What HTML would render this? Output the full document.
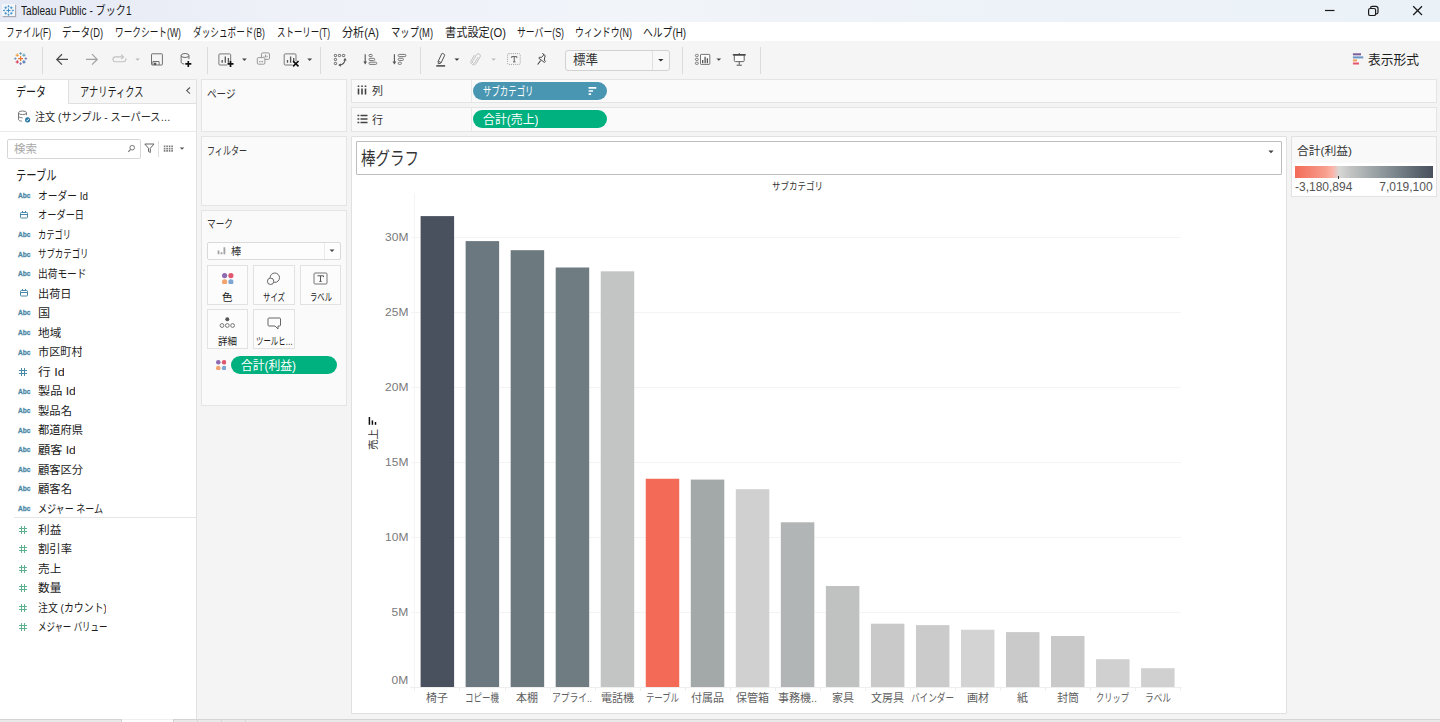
<!DOCTYPE html><html lang="ja"><head><meta charset="utf-8"><title>Tableau Public - ブック1</title><style>
html,body{margin:0;padding:0}
body{width:1440px;height:722px;position:relative;overflow:hidden;background:#f4f4f4;font-family:"Liberation Sans",sans-serif}
.b{position:absolute;display:block}
.t{position:absolute;white-space:nowrap;line-height:1.15;font-family:"Liberation Sans",sans-serif}
.j{position:absolute;display:block;overflow:hidden;white-space:nowrap;color:transparent;line-height:1;font-family:"Liberation Sans","Noto Sans CJK JP",sans-serif}
.j svg{position:absolute;left:0;top:0;overflow:visible}
.j svg text{font-family:"Liberation Sans","Noto Sans CJK JP",sans-serif}
</style></head><body><div class="b" style="left:0px;top:0px;width:1440px;height:22px;background:linear-gradient(90deg,#e5e9f4 0%,#eef1f8 20%,#f1f4f9 45%,#ecf2f8 75%,#ebf2f7 100%);"></div><span class="j" style="left:21.00px;top:3.50px;width:110.50px;height:15.00px;font-size:12px;"><svg width="110.50" height="15.00"><text x="0" y="10.56" font-size="12" fill="#1b1b1b" textLength="110.5" lengthAdjust="spacingAndGlyphs">Tableau Public - ブック1</text></svg></span><div class="b" style="left:0px;top:22px;width:1440px;height:19px;background:#fff;"></div><span class="j" style="left:6.00px;top:26.00px;width:45.00px;height:15.00px;font-size:12px;"><svg width="45.00" height="15.00"><text x="0" y="10.56" font-size="12" fill="#1b1b1b" textLength="45" lengthAdjust="spacingAndGlyphs">ファイル(F)</text></svg></span><span class="j" style="left:62.00px;top:26.00px;width:41.00px;height:15.00px;font-size:12px;"><svg width="41.00" height="15.00"><text x="0" y="10.56" font-size="12" fill="#1b1b1b" textLength="41" lengthAdjust="spacingAndGlyphs">データ(D)</text></svg></span><span class="j" style="left:115.00px;top:26.00px;width:66.00px;height:15.00px;font-size:12px;"><svg width="66.00" height="15.00"><text x="0" y="10.56" font-size="12" fill="#1b1b1b" textLength="66" lengthAdjust="spacingAndGlyphs">ワークシート(W)</text></svg></span><span class="j" style="left:193.00px;top:26.00px;width:72.00px;height:15.00px;font-size:12px;"><svg width="72.00" height="15.00"><text x="0" y="10.56" font-size="12" fill="#1b1b1b" textLength="72" lengthAdjust="spacingAndGlyphs">ダッシュボード(B)</text></svg></span><span class="j" style="left:277.00px;top:26.00px;width:53.00px;height:15.00px;font-size:12px;"><svg width="53.00" height="15.00"><text x="0" y="10.56" font-size="12" fill="#1b1b1b" textLength="53" lengthAdjust="spacingAndGlyphs">ストーリー(T)</text></svg></span><span class="j" style="left:342.00px;top:26.00px;width:37.00px;height:15.00px;font-size:12px;"><svg width="37.00" height="15.00"><text x="0" y="10.56" font-size="12" fill="#1b1b1b" textLength="37" lengthAdjust="spacingAndGlyphs">分析(A)</text></svg></span><span class="j" style="left:391.00px;top:26.00px;width:42.00px;height:15.00px;font-size:12px;"><svg width="42.00" height="15.00"><text x="0" y="10.56" font-size="12" fill="#1b1b1b" textLength="42" lengthAdjust="spacingAndGlyphs">マップ(M)</text></svg></span><span class="j" style="left:445.00px;top:26.00px;width:61.00px;height:15.00px;font-size:12px;"><svg width="61.00" height="15.00"><text x="0" y="10.56" font-size="12" fill="#1b1b1b" textLength="61" lengthAdjust="spacingAndGlyphs">書式設定(O)</text></svg></span><span class="j" style="left:517.00px;top:26.00px;width:47.00px;height:15.00px;font-size:12px;"><svg width="47.00" height="15.00"><text x="0" y="10.56" font-size="12" fill="#1b1b1b" textLength="47" lengthAdjust="spacingAndGlyphs">サーバー(S)</text></svg></span><span class="j" style="left:575.00px;top:26.00px;width:57.00px;height:15.00px;font-size:12px;"><svg width="57.00" height="15.00"><text x="0" y="10.56" font-size="12" fill="#1b1b1b" textLength="57" lengthAdjust="spacingAndGlyphs">ウィンドウ(N)</text></svg></span><span class="j" style="left:643.00px;top:26.00px;width:43.00px;height:15.00px;font-size:12px;"><svg width="43.00" height="15.00"><text x="0" y="10.56" font-size="12" fill="#1b1b1b" textLength="43" lengthAdjust="spacingAndGlyphs">ヘルプ(H)</text></svg></span><div class="b" style="left:0px;top:41px;width:1440px;height:39px;background:#f5f5f5;"></div><div class="b" style="left:565px;top:50px;width:105px;height:21px;background:#f8f8f8;border:1px solid #d2d2d2;border-radius:3px;box-sizing:border-box;"></div><div class="b" style="left:652px;top:51px;width:1px;height:19px;background:#e0e0e0;"></div><span class="j" style="left:572.50px;top:53.00px;width:25.00px;height:16.25px;font-size:13px;"><svg width="25.00" height="16.25"><text x="0" y="11.44" font-size="13" fill="#333" textLength="25" lengthAdjust="spacingAndGlyphs">標準</text></svg></span><span class="j" style="left:1368.00px;top:53.20px;width:51.00px;height:16.25px;font-size:13px;"><svg width="51.00" height="16.25"><text x="0" y="11.44" font-size="13" fill="#1c1c1c" textLength="51" lengthAdjust="spacingAndGlyphs">表示形式</text></svg></span><div class="b" style="left:0px;top:80px;width:1440px;height:642px;background:#f4f4f4;"></div><div class="b" style="left:0px;top:80px;width:196px;height:639px;background:#fff;"></div><div class="b" style="left:196px;top:80px;width:1px;height:639px;background:#e2e2e2;"></div><div class="b" style="left:0px;top:79px;width:197px;height:1px;background:#e4e4e4;"></div><div class="b" style="left:68px;top:80px;width:128px;height:24px;background:#f7f7f7;border-left:1px solid #e0e0e0;border-bottom:1px solid #e0e0e0;box-sizing:border-box;"></div><span class="j" style="left:16.00px;top:85.30px;width:30.00px;height:16.25px;font-size:13px;"><svg width="30.00" height="16.25"><text x="0" y="11.44" font-size="13" fill="#1c1c1c" textLength="30" lengthAdjust="spacingAndGlyphs">データ</text></svg></span><span class="j" style="left:80.00px;top:85.30px;width:63.50px;height:16.25px;font-size:13px;"><svg width="63.50" height="16.25"><text x="0" y="11.44" font-size="13" fill="#1c1c1c" textLength="63.5" lengthAdjust="spacingAndGlyphs">アナリティクス</text></svg></span><span class="j" style="left:34.50px;top:111.20px;width:135.50px;height:14.25px;font-size:11.4px;"><svg width="135.50" height="14.25"><text x="0" y="10.03" font-size="11.4" fill="#2a2a2a" textLength="135.5" lengthAdjust="spacingAndGlyphs">注文 (サンプル - スーパース…</text></svg></span><div class="b" style="left:0px;top:131px;width:196px;height:1px;background:#e9e9e9;"></div><div class="b" style="left:7px;top:139px;width:134px;height:20px;background:#fff;border:1px solid #d6d6d6;border-radius:2px;box-sizing:border-box;"></div><span class="j" style="left:14.00px;top:143.00px;width:23.00px;height:14.38px;font-size:11.5px;"><svg width="23.00" height="14.38"><text x="0" y="10.12" font-size="11.5" fill="#a8a8a8" textLength="23" lengthAdjust="spacingAndGlyphs">検索</text></svg></span><div class="b" style="left:158px;top:141px;width:1px;height:16px;background:#e0e0e0;"></div><span class="j" style="left:16.00px;top:168.00px;width:40.50px;height:16.88px;font-size:13.5px;"><svg width="40.50" height="16.88"><text x="0" y="11.88" font-size="13.5" fill="#1c1c1c" textLength="40.5" lengthAdjust="spacingAndGlyphs">テーブル</text></svg></span><span class="j" style="left:37.60px;top:189.80px;width:49.95px;height:14.38px;font-size:11.5px;"><svg width="49.95" height="14.38"><text x="0" y="10.12" font-size="11.5" fill="#1c1c1c" textLength="49.95" lengthAdjust="spacingAndGlyphs">オーダー Id</text></svg></span><div class="t" style="top:191.1px;font-size:8px;color:#4a87a5;font-weight:bold;-webkit-text-stroke:0.3px #4a87a5;transform:scaleX(.82);transform-origin:0 0;left:18px;">Abc</div><span class="j" style="left:37.60px;top:209.35px;width:46.07px;height:14.38px;font-size:11.5px;"><svg width="46.07" height="14.38"><text x="0" y="10.12" font-size="11.5" fill="#1c1c1c" textLength="46.07" lengthAdjust="spacingAndGlyphs">オーダー日</text></svg></span><svg class="b" style="left:20px;top:211px" width="9" height="8" viewBox="0 0 9 8" ><rect x="0.5" y="1.5" width="7" height="5.5" rx=".8" fill="none" stroke="#4a8aa8"/><path d="M0.5 3.5h7M2.5 0v1.5M5.5 0v1.5" stroke="#4a8aa8" fill="none"/></svg><span class="j" style="left:37.60px;top:228.90px;width:32.98px;height:14.38px;font-size:11.5px;"><svg width="32.98" height="14.38"><text x="0" y="10.12" font-size="11.5" fill="#1c1c1c" textLength="32.98" lengthAdjust="spacingAndGlyphs">カテゴリ</text></svg></span><div class="t" style="top:230.2px;font-size:8px;color:#4a87a5;font-weight:bold;-webkit-text-stroke:0.3px #4a87a5;transform:scaleX(.82);transform-origin:0 0;left:18px;">Abc</div><span class="j" style="left:37.60px;top:248.45px;width:50.44px;height:14.38px;font-size:11.5px;"><svg width="50.44" height="14.38"><text x="0" y="10.12" font-size="11.5" fill="#1c1c1c" textLength="50.44" lengthAdjust="spacingAndGlyphs">サブカテゴリ</text></svg></span><div class="t" style="top:249.8px;font-size:8px;color:#4a87a5;font-weight:bold;-webkit-text-stroke:0.3px #4a87a5;transform:scaleX(.82);transform-origin:0 0;left:18px;">Abc</div><span class="j" style="left:37.60px;top:268.00px;width:48.50px;height:14.38px;font-size:11.5px;"><svg width="48.50" height="14.38"><text x="0" y="10.12" font-size="11.5" fill="#1c1c1c" textLength="48.5" lengthAdjust="spacingAndGlyphs">出荷モード</text></svg></span><div class="t" style="top:269.3px;font-size:8px;color:#4a87a5;font-weight:bold;-webkit-text-stroke:0.3px #4a87a5;transform:scaleX(.82);transform-origin:0 0;left:18px;">Abc</div><span class="j" style="left:37.60px;top:287.55px;width:33.46px;height:14.38px;font-size:11.5px;"><svg width="33.46" height="14.38"><text x="0" y="10.12" font-size="11.5" fill="#1c1c1c" textLength="33.46" lengthAdjust="spacingAndGlyphs">出荷日</text></svg></span><svg class="b" style="left:20px;top:289px" width="9" height="8" viewBox="0 0 9 8" ><rect x="0.5" y="1.5" width="7" height="5.5" rx=".8" fill="none" stroke="#4a8aa8"/><path d="M0.5 3.5h7M2.5 0v1.5M5.5 0v1.5" stroke="#4a8aa8" fill="none"/></svg><span class="j" style="left:37.60px;top:307.10px;width:12.12px;height:14.38px;font-size:11.5px;"><svg width="12.12" height="14.38"><text x="0" y="10.12" font-size="11.5" fill="#1c1c1c" textLength="12.12" lengthAdjust="spacingAndGlyphs">国</text></svg></span><div class="t" style="top:308.4px;font-size:8px;color:#4a87a5;font-weight:bold;-webkit-text-stroke:0.3px #4a87a5;transform:scaleX(.82);transform-origin:0 0;left:18px;">Abc</div><span class="j" style="left:37.60px;top:326.65px;width:23.28px;height:14.38px;font-size:11.5px;"><svg width="23.28" height="14.38"><text x="0" y="10.12" font-size="11.5" fill="#1c1c1c" textLength="23.28" lengthAdjust="spacingAndGlyphs">地域</text></svg></span><div class="t" style="top:327.9px;font-size:8px;color:#4a87a5;font-weight:bold;-webkit-text-stroke:0.3px #4a87a5;transform:scaleX(.82);transform-origin:0 0;left:18px;">Abc</div><span class="j" style="left:37.60px;top:346.20px;width:44.62px;height:14.38px;font-size:11.5px;"><svg width="44.62" height="14.38"><text x="0" y="10.12" font-size="11.5" fill="#1c1c1c" textLength="44.62" lengthAdjust="spacingAndGlyphs">市区町村</text></svg></span><div class="t" style="top:347.5px;font-size:8px;color:#4a87a5;font-weight:bold;-webkit-text-stroke:0.3px #4a87a5;transform:scaleX(.82);transform-origin:0 0;left:18px;">Abc</div><span class="j" style="left:37.60px;top:365.75px;width:26.67px;height:14.38px;font-size:11.5px;"><svg width="26.67" height="14.38"><text x="0" y="10.12" font-size="11.5" fill="#1c1c1c" textLength="26.67" lengthAdjust="spacingAndGlyphs">行 Id</text></svg></span><svg class="b" style="left:19px;top:368px" width="9" height="9" viewBox="0 0 9 9" ><path d="M2.5 0v8M5.5 0v8M0 2.5h8M0 5.5h8" stroke="#4a8aa8" stroke-width="1" fill="none"/></svg><span class="j" style="left:37.60px;top:385.30px;width:37.83px;height:14.38px;font-size:11.5px;"><svg width="37.83" height="14.38"><text x="0" y="10.12" font-size="11.5" fill="#1c1c1c" textLength="37.83" lengthAdjust="spacingAndGlyphs">製品 Id</text></svg></span><div class="t" style="top:386.6px;font-size:8px;color:#4a87a5;font-weight:bold;-webkit-text-stroke:0.3px #4a87a5;transform:scaleX(.82);transform-origin:0 0;left:18px;">Abc</div><span class="j" style="left:37.60px;top:404.85px;width:33.95px;height:14.38px;font-size:11.5px;"><svg width="33.95" height="14.38"><text x="0" y="10.12" font-size="11.5" fill="#1c1c1c" textLength="33.95" lengthAdjust="spacingAndGlyphs">製品名</text></svg></span><div class="t" style="top:406.1px;font-size:8px;color:#4a87a5;font-weight:bold;-webkit-text-stroke:0.3px #4a87a5;transform:scaleX(.82);transform-origin:0 0;left:18px;">Abc</div><span class="j" style="left:37.60px;top:424.40px;width:45.10px;height:14.38px;font-size:11.5px;"><svg width="45.10" height="14.38"><text x="0" y="10.12" font-size="11.5" fill="#1c1c1c" textLength="45.1" lengthAdjust="spacingAndGlyphs">都道府県</text></svg></span><div class="t" style="top:425.7px;font-size:8px;color:#4a87a5;font-weight:bold;-webkit-text-stroke:0.3px #4a87a5;transform:scaleX(.82);transform-origin:0 0;left:18px;">Abc</div><span class="j" style="left:37.60px;top:443.95px;width:37.83px;height:14.38px;font-size:11.5px;"><svg width="37.83" height="14.38"><text x="0" y="10.12" font-size="11.5" fill="#1c1c1c" textLength="37.83" lengthAdjust="spacingAndGlyphs">顧客 Id</text></svg></span><div class="t" style="top:445.2px;font-size:8px;color:#4a87a5;font-weight:bold;-webkit-text-stroke:0.3px #4a87a5;transform:scaleX(.82);transform-origin:0 0;left:18px;">Abc</div><span class="j" style="left:37.60px;top:463.50px;width:45.10px;height:14.38px;font-size:11.5px;"><svg width="45.10" height="14.38"><text x="0" y="10.12" font-size="11.5" fill="#1c1c1c" textLength="45.1" lengthAdjust="spacingAndGlyphs">顧客区分</text></svg></span><div class="t" style="top:464.8px;font-size:8px;color:#4a87a5;font-weight:bold;-webkit-text-stroke:0.3px #4a87a5;transform:scaleX(.82);transform-origin:0 0;left:18px;">Abc</div><span class="j" style="left:37.60px;top:483.05px;width:33.95px;height:14.38px;font-size:11.5px;"><svg width="33.95" height="14.38"><text x="0" y="10.12" font-size="11.5" fill="#1c1c1c" textLength="33.95" lengthAdjust="spacingAndGlyphs">顧客名</text></svg></span><div class="t" style="top:484.3px;font-size:8px;color:#4a87a5;font-weight:bold;-webkit-text-stroke:0.3px #4a87a5;transform:scaleX(.82);transform-origin:0 0;left:18px;">Abc</div><span class="j" style="left:37.60px;top:502.60px;width:64.99px;height:14.38px;font-size:11.5px;"><svg width="64.99" height="14.38"><text x="0" y="10.12" font-size="11.5" fill="#1c1c1c" textLength="64.99" lengthAdjust="spacingAndGlyphs">メジャー ネーム</text></svg></span><div class="t" style="top:503.9px;font-size:8px;color:#4a87a5;font-weight:bold;-webkit-text-stroke:0.3px #4a87a5;transform:scaleX(.82);transform-origin:0 0;left:18px;">Abc</div><div class="b" style="left:14px;top:517px;width:182px;height:1px;background:#e6e6e6;"></div><span class="j" style="left:37.60px;top:523.70px;width:23.28px;height:14.38px;font-size:11.5px;"><svg width="23.28" height="14.38"><text x="0" y="10.12" font-size="11.5" fill="#1c1c1c" textLength="23.28" lengthAdjust="spacingAndGlyphs">利益</text></svg></span><svg class="b" style="left:19px;top:526px" width="9" height="9" viewBox="0 0 9 9" ><path d="M2.5 0v8M5.5 0v8M0 2.5h8M0 5.5h8" stroke="#5fb08f" stroke-width="1" fill="none"/></svg><span class="j" style="left:37.60px;top:543.20px;width:33.95px;height:14.38px;font-size:11.5px;"><svg width="33.95" height="14.38"><text x="0" y="10.12" font-size="11.5" fill="#1c1c1c" textLength="33.95" lengthAdjust="spacingAndGlyphs">割引率</text></svg></span><svg class="b" style="left:19px;top:545px" width="9" height="9" viewBox="0 0 9 9" ><path d="M2.5 0v8M5.5 0v8M0 2.5h8M0 5.5h8" stroke="#5fb08f" stroke-width="1" fill="none"/></svg><span class="j" style="left:37.60px;top:562.70px;width:23.28px;height:14.38px;font-size:11.5px;"><svg width="23.28" height="14.38"><text x="0" y="10.12" font-size="11.5" fill="#1c1c1c" textLength="23.28" lengthAdjust="spacingAndGlyphs">売上</text></svg></span><svg class="b" style="left:19px;top:565px" width="9" height="9" viewBox="0 0 9 9" ><path d="M2.5 0v8M5.5 0v8M0 2.5h8M0 5.5h8" stroke="#5fb08f" stroke-width="1" fill="none"/></svg><span class="j" style="left:37.60px;top:582.20px;width:23.28px;height:14.38px;font-size:11.5px;"><svg width="23.28" height="14.38"><text x="0" y="10.12" font-size="11.5" fill="#1c1c1c" textLength="23.28" lengthAdjust="spacingAndGlyphs">数量</text></svg></span><svg class="b" style="left:19px;top:584px" width="9" height="9" viewBox="0 0 9 9" ><path d="M2.5 0v8M5.5 0v8M0 2.5h8M0 5.5h8" stroke="#5fb08f" stroke-width="1" fill="none"/></svg><span class="j" style="left:37.60px;top:601.70px;width:68.87px;height:14.38px;font-size:11.5px;"><svg width="68.87" height="14.38"><text x="0" y="10.12" font-size="11.5" fill="#1c1c1c" textLength="68.87" lengthAdjust="spacingAndGlyphs">注文 (カウント)</text></svg></span><svg class="b" style="left:19px;top:604px" width="9" height="9" viewBox="0 0 9 9" ><path d="M2.5 0v8M5.5 0v8M0 2.5h8M0 5.5h8" stroke="#5fb08f" stroke-width="1" fill="none"/></svg><span class="j" style="left:37.60px;top:621.20px;width:69.36px;height:14.38px;font-size:11.5px;"><svg width="69.36" height="14.38"><text x="0" y="10.12" font-size="11.5" fill="#1c1c1c" textLength="69.36" lengthAdjust="spacingAndGlyphs">メジャー バリュー</text></svg></span><svg class="b" style="left:19px;top:623px" width="9" height="9" viewBox="0 0 9 9" ><path d="M2.5 0v8M5.5 0v8M0 2.5h8M0 5.5h8" stroke="#5fb08f" stroke-width="1" fill="none"/></svg><div class="b" style="left:201px;top:79px;width:146px;height:53px;background:#fafafa;border:1px solid #e4e4e4;box-sizing:border-box;"></div><span class="j" style="left:207.00px;top:88.00px;width:28.50px;height:14.38px;font-size:11.5px;"><svg width="28.50" height="14.38"><text x="0" y="10.12" font-size="11.5" fill="#333" textLength="28.5" lengthAdjust="spacingAndGlyphs">ページ</text></svg></span><div class="b" style="left:201px;top:136px;width:146px;height:70px;background:#fafafa;border:1px solid #e4e4e4;box-sizing:border-box;"></div><span class="j" style="left:207.00px;top:144.70px;width:40.00px;height:14.38px;font-size:11.5px;"><svg width="40.00" height="14.38"><text x="0" y="10.12" font-size="11.5" fill="#333" textLength="40" lengthAdjust="spacingAndGlyphs">フィルター</text></svg></span><div class="b" style="left:201px;top:210px;width:146px;height:196px;background:#fafafa;border:1px solid #e4e4e4;box-sizing:border-box;"></div><span class="j" style="left:207.00px;top:218.00px;width:26.00px;height:14.38px;font-size:11.5px;"><svg width="26.00" height="14.38"><text x="0" y="10.12" font-size="11.5" fill="#333" textLength="26" lengthAdjust="spacingAndGlyphs">マーク</text></svg></span><div class="b" style="left:207px;top:242px;width:134px;height:18px;background:#fdfdfd;border:1px solid #dadada;border-radius:2px;box-sizing:border-box;"></div><div class="b" style="left:324px;top:243px;width:1px;height:16px;background:#ebebeb;"></div><span class="j" style="left:230.50px;top:246.30px;width:10.30px;height:12.88px;font-size:10.3px;"><svg width="10.30" height="12.88"><text x="0" y="9.06" font-size="10.3" fill="#333" textLength="10.3" lengthAdjust="spacingAndGlyphs">棒</text></svg></span><div class="b" style="left:207px;top:265px;width:41px;height:40px;background:#fcfcfc;border:1px solid #e2e2e2;box-sizing:border-box;"></div><div class="b" style="left:253px;top:265px;width:42px;height:40px;background:#fcfcfc;border:1px solid #e2e2e2;box-sizing:border-box;"></div><div class="b" style="left:300px;top:265px;width:41px;height:40px;background:#fcfcfc;border:1px solid #e2e2e2;box-sizing:border-box;"></div><div class="b" style="left:207px;top:309px;width:41px;height:40px;background:#fcfcfc;border:1px solid #e2e2e2;box-sizing:border-box;"></div><div class="b" style="left:253px;top:309px;width:42px;height:40px;background:#fcfcfc;border:1px solid #e2e2e2;box-sizing:border-box;"></div><span class="j" style="left:222.25px;top:292.00px;width:10.50px;height:13.12px;font-size:10.5px;"><svg width="10.50" height="13.12"><text x="0" y="9.24" font-size="10.5" fill="#222" textLength="10.5" lengthAdjust="spacingAndGlyphs">色</text></svg></span><span class="j" style="left:263.00px;top:292.00px;width:22.00px;height:13.12px;font-size:10.5px;"><svg width="22.00" height="13.12"><text x="0" y="9.24" font-size="10.5" fill="#222" textLength="22" lengthAdjust="spacingAndGlyphs">サイズ</text></svg></span><span class="j" style="left:309.50px;top:292.00px;width:22.00px;height:13.12px;font-size:10.5px;"><svg width="22.00" height="13.12"><text x="0" y="9.24" font-size="10.5" fill="#222" textLength="22" lengthAdjust="spacingAndGlyphs">ラベル</text></svg></span><span class="j" style="left:218.00px;top:335.50px;width:19.00px;height:13.12px;font-size:10.5px;"><svg width="19.00" height="13.12"><text x="0" y="9.24" font-size="10.5" fill="#222" textLength="19" lengthAdjust="spacingAndGlyphs">詳細</text></svg></span><span class="j" style="left:255.50px;top:335.50px;width:37.00px;height:13.12px;font-size:10.5px;"><svg width="37.00" height="13.12"><text x="0" y="9.24" font-size="10.5" fill="#222" textLength="37" lengthAdjust="spacingAndGlyphs">ツールヒ…</text></svg></span><div class="b" style="left:231px;top:356px;width:106px;height:18px;background:#00b180;border-radius:9px;"></div><span class="j" style="left:240.60px;top:358.50px;width:55.00px;height:15.00px;font-size:12px;"><svg width="55.00" height="15.00"><text x="0" y="10.56" font-size="12" fill="#fff" textLength="55" lengthAdjust="spacingAndGlyphs">合計(利益)</text></svg></span><div class="b" style="left:351px;top:79px;width:1086px;height:24px;background:#fafafa;border:1px solid #e4e4e4;box-sizing:border-box;"></div><div class="b" style="left:471px;top:80px;width:1px;height:22px;background:#e8e8e8;"></div><span class="j" style="left:372.30px;top:85.20px;width:11.00px;height:13.75px;font-size:11px;"><svg width="11.00" height="13.75"><text x="0" y="9.68" font-size="11" fill="#333" textLength="11" lengthAdjust="spacingAndGlyphs">列</text></svg></span><div class="b" style="left:351px;top:107px;width:1086px;height:25px;background:#fafafa;border:1px solid #e4e4e4;box-sizing:border-box;"></div><div class="b" style="left:471px;top:108px;width:1px;height:23px;background:#e8e8e8;"></div><span class="j" style="left:372.30px;top:114.20px;width:11.00px;height:13.75px;font-size:11px;"><svg width="11.00" height="13.75"><text x="0" y="9.68" font-size="11" fill="#333" textLength="11" lengthAdjust="spacingAndGlyphs">行</text></svg></span><div class="b" style="left:473px;top:82px;width:134px;height:18px;background:#4996b2;border-radius:9px;"></div><span class="j" style="left:482.70px;top:84.50px;width:50.50px;height:15.00px;font-size:12px;"><svg width="50.50" height="15.00"><text x="0" y="10.56" font-size="12" fill="#fff" textLength="50.5" lengthAdjust="spacingAndGlyphs">サブカテゴリ</text></svg></span><div class="b" style="left:473px;top:110.3px;width:134px;height:18.2px;background:#00b180;border-radius:9.1px;"></div><span class="j" style="left:482.50px;top:113.00px;width:55.50px;height:15.00px;font-size:12px;"><svg width="55.50" height="15.00"><text x="0" y="10.56" font-size="12" fill="#fff" textLength="55.5" lengthAdjust="spacingAndGlyphs">合計(売上)</text></svg></span><div class="b" style="left:351px;top:136px;width:936px;height:578px;background:#fff;border:1px solid #e0e0e0;border-radius:1px;box-sizing:border-box;"></div><div class="b" style="left:356px;top:141px;width:926px;height:34px;background:#fff;border:1px solid #bdbdbd;border-radius:1px;box-sizing:border-box;"></div><span class="j" style="left:361.00px;top:148.60px;width:58.00px;height:23.00px;font-size:18.4px;"><svg width="58.00" height="23.00"><text x="0" y="16.19" font-size="18.4" fill="#333" textLength="58" lengthAdjust="spacingAndGlyphs">棒グラフ</text></svg></span><span class="j" style="left:771.50px;top:180.50px;width:51.00px;height:13.12px;font-size:10.5px;"><svg width="51.00" height="13.12"><text x="0" y="9.24" font-size="10.5" fill="#333" textLength="51" lengthAdjust="spacingAndGlyphs">サブカテゴリ</text></svg></span><div class="b" style="left:414px;top:193px;width:1px;height:495px;background:#f4f4f4;"></div><div class="b" style="left:411px;top:612px;width:770px;height:1px;background:#f4f4f4;"></div><div class="b" style="left:411px;top:537px;width:770px;height:1px;background:#f4f4f4;"></div><div class="b" style="left:411px;top:462px;width:770px;height:1px;background:#f4f4f4;"></div><div class="b" style="left:411px;top:387px;width:770px;height:1px;background:#f4f4f4;"></div><div class="b" style="left:411px;top:312px;width:770px;height:1px;background:#f4f4f4;"></div><div class="b" style="left:411px;top:237px;width:770px;height:1px;background:#f4f4f4;"></div><div class="b" style="left:410px;top:687px;width:772px;height:1px;background:#eeeeee;"></div><div class="b" style="left:414px;top:688px;width:1px;height:3px;background:#efefef;"></div><div class="b" style="left:459px;top:688px;width:1px;height:3px;background:#efefef;"></div><div class="b" style="left:505px;top:688px;width:1px;height:3px;background:#efefef;"></div><div class="b" style="left:550px;top:688px;width:1px;height:3px;background:#efefef;"></div><div class="b" style="left:595px;top:688px;width:1px;height:3px;background:#efefef;"></div><div class="b" style="left:640px;top:688px;width:1px;height:3px;background:#efefef;"></div><div class="b" style="left:685px;top:688px;width:1px;height:3px;background:#efefef;"></div><div class="b" style="left:730px;top:688px;width:1px;height:3px;background:#efefef;"></div><div class="b" style="left:775px;top:688px;width:1px;height:3px;background:#efefef;"></div><div class="b" style="left:820px;top:688px;width:1px;height:3px;background:#efefef;"></div><div class="b" style="left:865px;top:688px;width:1px;height:3px;background:#efefef;"></div><div class="b" style="left:910px;top:688px;width:1px;height:3px;background:#efefef;"></div><div class="b" style="left:955px;top:688px;width:1px;height:3px;background:#efefef;"></div><div class="b" style="left:1000px;top:688px;width:1px;height:3px;background:#efefef;"></div><div class="b" style="left:1045px;top:688px;width:1px;height:3px;background:#efefef;"></div><div class="b" style="left:1090px;top:688px;width:1px;height:3px;background:#efefef;"></div><div class="b" style="left:1135px;top:688px;width:1px;height:3px;background:#efefef;"></div><div class="b" style="left:1180px;top:688px;width:1px;height:3px;background:#efefef;"></div><div class="t" style="top:673.7px;font-size:11px;color:#7a7a7a;transform:scaleX(1.09);transform-origin:100% 50%;right:1031.3px;">0M</div><div class="t" style="top:606.2px;font-size:11px;color:#7a7a7a;transform:scaleX(1.09);transform-origin:100% 50%;right:1031.3px;">5M</div><div class="t" style="top:531.2px;font-size:11px;color:#7a7a7a;transform:scaleX(1.09);transform-origin:100% 50%;right:1031.3px;">10M</div><div class="t" style="top:456.2px;font-size:11px;color:#7a7a7a;transform:scaleX(1.09);transform-origin:100% 50%;right:1031.3px;">15M</div><div class="t" style="top:381.2px;font-size:11px;color:#7a7a7a;transform:scaleX(1.09);transform-origin:100% 50%;right:1031.3px;">20M</div><div class="t" style="top:306.2px;font-size:11px;color:#7a7a7a;transform:scaleX(1.09);transform-origin:100% 50%;right:1031.3px;">25M</div><div class="t" style="top:231.2px;font-size:11px;color:#7a7a7a;transform:scaleX(1.09);transform-origin:100% 50%;right:1031.3px;">30M</div><span class="j" style="left:426.35px;top:691.70px;width:22.00px;height:13.75px;font-size:11px;"><svg width="22.00" height="13.75"><text x="0" y="9.68" font-size="11" fill="#606060" textLength="22" lengthAdjust="spacingAndGlyphs">椅子</text></svg></span><span class="j" style="left:465.38px;top:691.70px;width:34.00px;height:13.75px;font-size:11px;"><svg width="34.00" height="13.75"><text x="0" y="9.68" font-size="11" fill="#606060" textLength="34" lengthAdjust="spacingAndGlyphs">コピー機</text></svg></span><span class="j" style="left:516.41px;top:691.70px;width:22.00px;height:13.75px;font-size:11px;"><svg width="22.00" height="13.75"><text x="0" y="9.68" font-size="11" fill="#606060" textLength="22" lengthAdjust="spacingAndGlyphs">本棚</text></svg></span><span class="j" style="left:552.44px;top:691.70px;width:40.00px;height:13.75px;font-size:11px;"><svg width="40.00" height="13.75"><text x="0" y="9.68" font-size="11" fill="#606060" textLength="40" lengthAdjust="spacingAndGlyphs">アプライ..</text></svg></span><span class="j" style="left:600.97px;top:691.70px;width:33.00px;height:13.75px;font-size:11px;"><svg width="33.00" height="13.75"><text x="0" y="9.68" font-size="11" fill="#606060" textLength="33" lengthAdjust="spacingAndGlyphs">電話機</text></svg></span><span class="j" style="left:646.00px;top:691.70px;width:33.00px;height:13.75px;font-size:11px;"><svg width="33.00" height="13.75"><text x="0" y="9.68" font-size="11" fill="#606060" textLength="33" lengthAdjust="spacingAndGlyphs">テーブル</text></svg></span><span class="j" style="left:691.03px;top:691.70px;width:33.00px;height:13.75px;font-size:11px;"><svg width="33.00" height="13.75"><text x="0" y="9.68" font-size="11" fill="#606060" textLength="33" lengthAdjust="spacingAndGlyphs">付属品</text></svg></span><span class="j" style="left:736.06px;top:691.70px;width:33.00px;height:13.75px;font-size:11px;"><svg width="33.00" height="13.75"><text x="0" y="9.68" font-size="11" fill="#606060" textLength="33" lengthAdjust="spacingAndGlyphs">保管箱</text></svg></span><span class="j" style="left:778.09px;top:691.70px;width:39.00px;height:13.75px;font-size:11px;"><svg width="39.00" height="13.75"><text x="0" y="9.68" font-size="11" fill="#606060" textLength="39" lengthAdjust="spacingAndGlyphs">事務機..</text></svg></span><span class="j" style="left:831.62px;top:691.70px;width:22.00px;height:13.75px;font-size:11px;"><svg width="22.00" height="13.75"><text x="0" y="9.68" font-size="11" fill="#606060" textLength="22" lengthAdjust="spacingAndGlyphs">家具</text></svg></span><span class="j" style="left:871.15px;top:691.70px;width:33.00px;height:13.75px;font-size:11px;"><svg width="33.00" height="13.75"><text x="0" y="9.68" font-size="11" fill="#606060" textLength="33" lengthAdjust="spacingAndGlyphs">文房具</text></svg></span><span class="j" style="left:911.18px;top:691.70px;width:43.00px;height:13.75px;font-size:11px;"><svg width="43.00" height="13.75"><text x="0" y="9.68" font-size="11" fill="#606060" textLength="43" lengthAdjust="spacingAndGlyphs">バインダー</text></svg></span><span class="j" style="left:966.71px;top:691.70px;width:22.00px;height:13.75px;font-size:11px;"><svg width="22.00" height="13.75"><text x="0" y="9.68" font-size="11" fill="#606060" textLength="22" lengthAdjust="spacingAndGlyphs">画材</text></svg></span><span class="j" style="left:1017.24px;top:691.70px;width:11.00px;height:13.75px;font-size:11px;"><svg width="11.00" height="13.75"><text x="0" y="9.68" font-size="11" fill="#606060" textLength="11" lengthAdjust="spacingAndGlyphs">紙</text></svg></span><span class="j" style="left:1056.77px;top:691.70px;width:22.00px;height:13.75px;font-size:11px;"><svg width="22.00" height="13.75"><text x="0" y="9.68" font-size="11" fill="#606060" textLength="22" lengthAdjust="spacingAndGlyphs">封筒</text></svg></span><span class="j" style="left:1096.30px;top:691.70px;width:33.00px;height:13.75px;font-size:11px;"><svg width="33.00" height="13.75"><text x="0" y="9.68" font-size="11" fill="#606060" textLength="33" lengthAdjust="spacingAndGlyphs">クリップ</text></svg></span><span class="j" style="left:1144.83px;top:691.70px;width:26.00px;height:13.75px;font-size:11px;"><svg width="26.00" height="13.75"><text x="0" y="9.68" font-size="11" fill="#606060" textLength="26" lengthAdjust="spacingAndGlyphs">ラベル</text></svg></span><svg class="b" style="left:415px;top:200px" width="770" height="487" viewBox="415 200 770 487"><rect x="420.60" y="216.1" width="33.5" height="470.90" fill="#4a515e"/><rect x="465.63" y="241.1" width="33.5" height="445.90" fill="#6b7880"/><rect x="510.66" y="250.2" width="33.5" height="436.80" fill="#6c797f"/><rect x="555.69" y="267.5" width="33.5" height="419.50" fill="#6f7c82"/><rect x="600.72" y="271.3" width="33.5" height="415.70" fill="#c3c5c4"/><rect x="645.75" y="478.75" width="33.5" height="208.25" fill="#f36b57"/><rect x="690.78" y="479.6" width="33.5" height="207.40" fill="#a3a8a9"/><rect x="735.81" y="489.2" width="33.5" height="197.80" fill="#cfd0cf"/><rect x="780.84" y="522.3" width="33.5" height="164.70" fill="#b2b5b5"/><rect x="825.87" y="586" width="33.5" height="101.00" fill="#c0c2c1"/><rect x="870.90" y="623.7" width="33.5" height="63.30" fill="#c8c9c8"/><rect x="915.93" y="625.1" width="33.5" height="61.90" fill="#cacbca"/><rect x="960.96" y="629.75" width="33.5" height="57.25" fill="#d2d3d2"/><rect x="1005.99" y="632.1" width="33.5" height="54.90" fill="#c9cac9"/><rect x="1051.02" y="636" width="33.5" height="51.00" fill="#c8c9c8"/><rect x="1096.05" y="659.2" width="33.5" height="27.80" fill="#d0d0d0"/><rect x="1141.08" y="668.2" width="33.5" height="18.80" fill="#d0d0d0"/></svg><span class="j" style="left:367.50px;top:450.00px;width:21.00px;height:13.12px;font-size:10.5px;transform:rotate(-90deg);transform-origin:0 0;"><svg width="21.00" height="13.12"><text x="0" y="9.24" font-size="10.5" fill="#333" textLength="21" lengthAdjust="spacingAndGlyphs">売上</text></svg></span><div class="b" style="left:1291px;top:136px;width:146px;height:61px;background:#fff;border:1px solid #e2e2e2;box-sizing:border-box;"></div><div class="b" style="left:1292px;top:137px;width:144px;height:26px;background:#f9f9f9;"></div><span class="j" style="left:1296.80px;top:144.50px;width:55.00px;height:14.38px;font-size:11.5px;"><svg width="55.00" height="14.38"><text x="0" y="10.12" font-size="11.5" fill="#333" textLength="55" lengthAdjust="spacingAndGlyphs">合計(利益)</text></svg></span><div class="b" style="left:1295px;top:166px;width:138px;height:12px;background:linear-gradient(90deg,#f36b57 0%,#f79e8e 22%,#fbb3a6 27%,#d7d7d6 32%,#c2c4c3 40%,#8b959a 65%,#5b6670 88%,#49515d 100%);"></div><div class="b" style="left:1338px;top:176px;width:1px;height:3px;background:#333;"></div><div class="t" style="top:181px;font-size:12px;color:#555;left:1295px;">-3,180,894</div><div class="t" style="top:181px;font-size:12px;color:#555;right:7.400000000000091px;">7,019,100</div><div class="b" style="left:0px;top:719px;width:1440px;height:3px;background:#e9e9e9;"></div><div class="b" style="left:0px;top:719px;width:1440px;height:1px;background:#d4d4d4;"></div><div class="b" style="left:121px;top:720px;width:53px;height:2px;background:#fdfdfd;border-left:1px solid #d0d0d0;border-right:1px solid #d0d0d0;box-sizing:border-box;"></div><div class="b" style="left:122px;top:719px;width:51px;height:1px;background:#efefef;"></div><div class="b" style="left:197px;top:720px;width:1px;height:2px;background:#d4d4d4;"></div><div class="b" style="left:221px;top:720px;width:1px;height:2px;background:#d4d4d4;"></div><div class="b" style="left:245px;top:720px;width:1px;height:2px;background:#d4d4d4;"></div><div class="b" style="left:2px;top:4px;width:13px;height:12px;background:#f3f6fa;box-shadow:1px 1px 1px rgba(0,0,0,.28)"></div><svg class="b" style="left:3.3px;top:4.6px" width="11" height="11" viewBox="0 0 11 11" ><path d="M3.4692307692307693 5.5H7.530769230769231M5.5 3.4692307692307693V7.530769230769231" stroke="#3f8fc9" stroke-width="1.0576923076923077" fill="none"/><path d="M4.4 1.2692307692307692H6.6M5.5 0.16923076923076907V2.3692307692307693" stroke="#3f8fc9" stroke-width="0.7615384615384615" fill="none"/><path d="M4.4 9.73076923076923H6.6M5.5 8.63076923076923V10.83076923076923" stroke="#3f8fc9" stroke-width="0.7615384615384615" fill="none"/><path d="M0.08461538461538476 5.5H2.1153846153846154M1.1 4.484615384615385V6.515384615384615" stroke="#3f8fc9" stroke-width="0.7615384615384615" fill="none"/><path d="M8.884615384615383 5.5H10.915384615384614M9.899999999999999 4.484615384615385V6.515384615384615" stroke="#3f8fc9" stroke-width="0.7615384615384615" fill="none"/><path d="M1.353846153846154 2.707692307692308H4.061538461538461M2.707692307692308 1.353846153846154V4.061538461538461" stroke="#3f8fc9" stroke-width="0.8461538461538461" fill="none"/><path d="M6.938461538461539 2.707692307692308H9.646153846153847M8.292307692307693 1.353846153846154V4.061538461538461" stroke="#3f8fc9" stroke-width="0.8461538461538461" fill="none"/><path d="M1.353846153846154 8.292307692307693H4.061538461538461M2.707692307692308 6.938461538461539V9.646153846153847" stroke="#3f8fc9" stroke-width="0.8461538461538461" fill="none"/><path d="M6.938461538461539 8.292307692307693H9.646153846153847M8.292307692307693 6.938461538461539V9.646153846153847" stroke="#3f8fc9" stroke-width="0.8461538461538461" fill="none"/></svg><svg class="b" style="left:1320px;top:0px" width="120" height="22" viewBox="0 0 120 22" ><path d="M5 10.500h9.500" stroke="#1a1a1a" stroke-width="1.200"/><rect x="48.600" y="8.500" width="7" height="7" rx="1.600" fill="none" stroke="#1a1a1a" stroke-width="1.200"/><path d="M50.600 8.300v-.300a1.600 1.600 0 0 1 1.600-1.600h3.800a2 2 0 0 1 2 2v3.800a1.600 1.600 0 0 1-1.600 1.600h-.400" fill="none" stroke="#1a1a1a" stroke-width="1.200"/><path d="M93.200 6.200l8.800 8.800M102 6.200L93.200 15" stroke="#1a1a1a" stroke-width="1.250" fill="none"/></svg><svg class="b" style="left:14px;top:52.3px" width="13.2" height="13.2" viewBox="0 0 13.2 13.2" ><path d="M4.163076923076924 6.6H9.036923076923076M6.6 4.163076923076924V9.036923076923076" stroke="#e8762d" stroke-width="1.2692307692307692" fill="none"/><path d="M5.279999999999999 1.523076923076923H7.92M6.6 0.20307692307692293V2.8430769230769233" stroke="#5b9bb0" stroke-width="0.9138461538461539" fill="none"/><path d="M5.279999999999999 11.676923076923076H7.92M6.6 10.356923076923076V12.996923076923077" stroke="#7b74b5" stroke-width="0.9138461538461539" fill="none"/><path d="M0.1015384615384618 6.6H2.5384615384615383M1.32 5.381538461538462V7.818461538461538" stroke="#6f8fc0" stroke-width="0.9138461538461539" fill="none"/><path d="M10.661538461538461 6.6H13.098461538461537M11.879999999999999 5.381538461538462V7.818461538461538" stroke="#6b6fb3" stroke-width="0.9138461538461539" fill="none"/><path d="M1.6246153846153846 3.249230769230769H4.873846153846154M3.249230769230769 1.6246153846153846V4.873846153846154" stroke="#ee9a3a" stroke-width="1.0153846153846153" fill="none"/><path d="M8.326153846153845 3.249230769230769H11.575384615384616M9.95076923076923 1.6246153846153846V4.873846153846154" stroke="#5ba0b5" stroke-width="1.0153846153846153" fill="none"/><path d="M1.6246153846153846 9.95076923076923H4.873846153846154M3.249230769230769 8.326153846153845V11.575384615384616" stroke="#d5304c" stroke-width="1.0153846153846153" fill="none"/><path d="M8.326153846153845 9.95076923076923H11.575384615384616M9.95076923076923 8.326153846153845V11.575384615384616" stroke="#3565a8" stroke-width="1.0153846153846153" fill="none"/></svg><div class="b" style="left:42px;top:47px;width:1px;height:27px;background:#dcdcdc"></div><svg class="b" style="left:54px;top:52px" width="16" height="15" viewBox="54 52 16 15"><path d="M68 59.4H57M62 54.2l-5.2 5.2 5.2 5.2" fill="none" stroke="#4a4a4a" stroke-width="1.3"/></svg><svg class="b" style="left:84px;top:52px" width="16" height="15" viewBox="84 52 16 15"><path d="M86 59.4h11M92 54.2l5.2 5.2-5.2 5.2" fill="none" stroke="#a0a0a0" stroke-width="1.2"/></svg><svg class="b" style="left:110px;top:52px" width="18" height="15" viewBox="110 52 18 15"><path d="M123.2 56.9H115.4a2.45 2.45 0 0 0 0 4.9h8a2.45 2.45 0 0 0 2.2-3.6" fill="none" stroke="#c2c2c2" stroke-width="1.1"/><path d="M121.2 54.6l2.3 2.3-2.3 2.3" fill="none" stroke="#c2c2c2" stroke-width="1.1"/></svg><svg class="b" style="left:133px;top:56px" width="10" height="7" viewBox="133 56 10 7"><path d="M135.4 58.6h4.4L137.6 60.7z" fill="#b8b8b8"/></svg><svg class="b" style="left:150px;top:52px" width="15" height="15" viewBox="150 52 15 15"><rect x="151.5" y="53.8" width="10.9" height="11.2" rx=".6" fill="none" stroke="#717171"/><path d="M152.9 65V61.5h6.2V65" fill="none" stroke="#717171"/><rect x="154" y="62.7" width="2.3" height="2.3" fill="#555"/></svg><svg class="b" style="left:179px;top:51px" width="16" height="18" viewBox="179 51 16 18"><ellipse cx="185.05" cy="55.5" rx="3.9" ry="2" fill="none" stroke="#6e6e6e"/><path d="M181.15 55.5v6.6c0 1 1.2 1.8 3 1.9M188.95 55.5v3.6" fill="none" stroke="#6e6e6e"/><path d="M185.3 63.9H191.3M188.3 60.9V66.9" stroke="#111" stroke-width="1.6" fill="none"/></svg><div class="b" style="left:207px;top:47px;width:1px;height:27px;background:#dcdcdc"></div><svg class="b" style="left:218px;top:52px" width="18" height="17" viewBox="218 52 18 17"><path d="M230.7 61V54.9a1 1 0 0 0-1-1H219.89999999999998a1 1 0 0 0-1 1V64a1 1 0 0 0 1 1H227.2" fill="none" stroke="#7a7a7a"/><path d="M222.2 62.8V60M225.29999999999998 62.8V56.5M228.39999999999998 62.8V58" stroke="#555" stroke-width="1.3" fill="none"/><path d="M227.5 63.9H233.5M230.5 60.9V66.9" stroke="#111" stroke-width="1.7" fill="none"/></svg><svg class="b" style="left:240px;top:56px" width="10" height="7" viewBox="240 56 10 7"><path d="M242.0 58.6h4.8L244.4 60.9z" fill="#444"/></svg><svg class="b" style="left:255px;top:51px" width="17" height="16" viewBox="255 51 17 16"><rect x="261.5" y="52.9" width="8" height="6.5" rx="1.2" fill="#f5f5f5" stroke="#999"/><path d="M264 57.3v-1M265.5 57.3v-2.6M267 57.3v-1.5" stroke="#999" fill="none"/><rect x="257.3" y="57.6" width="7.6" height="6.6" rx="1.2" fill="#f5f5f5" stroke="#999"/><path d="M259.6 62.2v-1.2M261.1 62.2v-1.2M262.6 62.2v-1.2" stroke="#999" fill="none"/></svg><svg class="b" style="left:283px;top:52px" width="18" height="17" viewBox="283 52 18 17"><path d="M296.0 61V54.9a1 1 0 0 0-1-1H285.2a1 1 0 0 0-1 1V64a1 1 0 0 0 1 1H292.5" fill="none" stroke="#7a7a7a"/><path d="M287.5 62.8V60M290.6 62.8V56.5M293.7 62.8V58" stroke="#555" stroke-width="1.3" fill="none"/><path d="M293.1 61l5.4 5.4M298.5 61l-5.4 5.4" stroke="#111" stroke-width="1.7" fill="none"/></svg><svg class="b" style="left:305px;top:56px" width="10" height="7" viewBox="305 56 10 7"><path d="M307.3 58.6h4.8L309.7 60.9z" fill="#444"/></svg><div class="b" style="left:320px;top:47px;width:1px;height:27px;background:#dcdcdc"></div><svg class="b" style="left:332px;top:52px" width="17" height="16" viewBox="332 52 17 16"><g fill="none" stroke="#707070"><rect x="334.3" y="54.4" width="2.3" height="2.2" rx=".7"/><rect x="338.3" y="54.4" width="2.3" height="2.2" rx=".7"/><rect x="342.3" y="54.4" width="2.5" height="2.2" rx=".7"/><rect x="334.3" y="58.4" width="2.3" height="2.2" rx=".7"/><rect x="334.3" y="62.4" width="2.3" height="2.2" rx=".7"/></g><path d="M345 60.2a6 6 0 0 1-5.2 4.9" fill="none" stroke="#555" stroke-width="1.1"/><path d="M345 57.8l1.7 2.6h-3.4zM338.2 65.1l2.6-1.7v3.4z" fill="#555"/></svg><svg class="b" style="left:362px;top:52px" width="17" height="15" viewBox="362 52 17 15"><path d="M365.2 54.3v8" stroke="#555" stroke-width="1.1"/><path d="M363.3 61.4h3.8L365.2 64.5z" fill="#555"/><g fill="none" stroke="#777"><rect x="369.0" y="54.4" width="3.2" height="2.2" rx="1"/><rect x="369.0" y="58.3" width="5.7" height="2.2" rx="1"/><rect x="369.0" y="62.2" width="7.7" height="2.2" rx="1"/></g></svg><svg class="b" style="left:391px;top:52px" width="17" height="15" viewBox="391 52 17 15"><path d="M394.4 54.3v8" stroke="#555" stroke-width="1.1"/><path d="M392.5 61.4h3.8L394.4 64.5z" fill="#555"/><g fill="none" stroke="#777"><rect x="398.2" y="54.4" width="7.7" height="2.2" rx="1"/><rect x="398.2" y="58.3" width="5.2" height="2.2" rx="1"/><rect x="398.2" y="62.2" width="3.2" height="2.2" rx="1"/></g></svg><div class="b" style="left:420px;top:47px;width:1px;height:27px;background:#dcdcdc"></div><svg class="b" style="left:434px;top:51px" width="14" height="18" viewBox="434 51 14 18"><path d="M442.3 53.4l2 .9a.8.8 0 0 1 .4 1L441 63l-2.6.9-.3-2.4 3.6-7.7a.5.5 0 0 1 .6-.4z" fill="none" stroke="#555"/><path d="M438.3 61.2l2.6 1.3" stroke="#555" fill="none"/><path d="M436.3 65.9h8.8" stroke="#444" stroke-width="1.5"/></svg><svg class="b" style="left:452px;top:56px" width="10" height="7" viewBox="452 56 10 7"><path d="M454.5 58.5h4.8L456.9 60.8z" fill="#333"/></svg><svg class="b" style="left:469px;top:51px" width="14" height="16" viewBox="469 51 14 16"><path d="M478.2 57l-3.3 5.6a1.3 1.3 0 0 1-2.3-1.3l4-6.7a2.1 2.1 0 0 1 3.6 2.1l-4.1 7a2.9 2.9 0 0 1-5-2.9l3.3-5.7" fill="none" stroke="#c2c2c2" stroke-width="1"/></svg><svg class="b" style="left:489px;top:56px" width="10" height="7" viewBox="489 56 10 7"><path d="M491.40000000000003 58.6h4.4L493.6 60.7z" fill="#b8b8b8"/></svg><svg class="b" style="left:506px;top:52px" width="16" height="14" viewBox="506 52 16 14"><rect x="507.6" y="53.6" width="12.6" height="10.8" rx="1" fill="none" stroke="#a0a0a0" stroke-dasharray="1.050 1.050"/><path d="M511.700 58v-1.400h5.100v1.400M514.250 56.600v5.200M513 61.900h2.500" fill="none" stroke="#555" stroke-width=".900"/></svg><svg class="b" style="left:535px;top:51px" width="13" height="16" viewBox="535 51 13 16"><path d="M542.6 53.6l2.9 2.3-.7.9-.5 3.2 1.1 1.5-1 .9-5.600-4.200.8-1 2 .2 2.300-2.700z" fill="none" stroke="#4a4a4a"/><path d="M540.6 60.700l-3 3.800" stroke="#4a4a4a" stroke-width="1.1" fill="none"/></svg><svg class="b" style="left:656px;top:57px" width="10" height="7" viewBox="656 57 10 7"><path d="M658.0999999999999 59h5.4L660.8 61.6z" fill="#333"/></svg><div class="b" style="left:682px;top:47px;width:1px;height:27px;background:#dcdcdc"></div><svg class="b" style="left:694px;top:52px" width="18" height="15" viewBox="694 52 18 15"><rect x="700.5" y="54.4" width="9.3" height="10" rx=".6" fill="#fdfdfd" stroke="#777"/><g fill="none" stroke="#777"><rect x="695.4" y="54.4" width="2.9" height="2.2" rx="1"/><rect x="695.4" y="58.3" width="2.9" height="2.2" rx="1"/><rect x="695.4" y="62.2" width="2.9" height="2.2" rx="1"/></g><path d="M702.7 63.2V60M705.1 63.2V56.700M707.400 63.2V58.200" stroke="#555" stroke-width="1.3" fill="none"/></svg><svg class="b" style="left:714px;top:56px" width="10" height="7" viewBox="714 56 10 7"><path d="M716.4 58.4h4.8L718.8 60.699999999999996z" fill="#444"/></svg><svg class="b" style="left:731px;top:51px" width="17" height="17" viewBox="731 51 17 17"><path d="M734.300 55v5.600a1 1 0 0 0 1 1h7.900a1 1 0 0 0 1-1V55z" fill="#fdfdfd" stroke="#666"/><path d="M732.8 54.800h12.900" stroke="#444" stroke-width="1.5"/><path d="M739.25 53v1.500M739.25 61.800v3M736.600 65.200h5.300" stroke="#555" fill="none"/></svg><div class="b" style="left:760px;top:47px;width:1px;height:27px;background:#dcdcdc"></div><svg class="b" style="left:1352px;top:53px" width="13" height="12" viewBox="0 0 13 12" ><path d="M.900 1.300h8.100" stroke="#7b5f9a" stroke-width="2"/><path d="M.900 4.400h10.400" stroke="#6b96c8" stroke-width="2"/><path d="M.900 7.450h4.100" stroke="#f0a060" stroke-width="2"/><path d="M.900 10.500h6.100" stroke="#e8566e" stroke-width="2"/></svg><svg class="b" style="left:185px;top:86px" width="8" height="10" viewBox="0 0 8 10" ><path d="M5 1.5L1.700 4.600l3.300 3.100" fill="none" stroke="#555" stroke-width="1.1"/></svg><svg class="b" style="left:17px;top:110px" width="14" height="14" viewBox="0 0 14 14" ><g fill="none" stroke="#777" stroke-width="1"><ellipse cx="5.5" cy="2.8" rx="4" ry="1.8"/><path d="M1.5 2.8v6.5c0 1 1.4 1.8 3.3 1.8M9.5 2.8v2.4M1.5 6c0 1 1.6 1.8 4 1.8"/></g><circle cx="10.6" cy="9.800" r="2.600" fill="#2b7aa8"/><path d="M9.300 9.800l1 1 1.600-1.900" fill="none" stroke="#fff" stroke-width=".9"/></svg><svg class="b" style="left:127px;top:144px" width="10" height="10" viewBox="0 0 10 10" ><circle cx="5.200" cy="3.700" r="2.300" fill="none" stroke="#777" stroke-width="1"/><path d="M3.600 5.400L1.300 7.800" stroke="#777" stroke-width="1.200"/></svg><svg class="b" style="left:144px;top:143px" width="11" height="11" viewBox="0 0 11 11" ><path d="M.8 1h9.2L6.3 5.3v4.2L4.5 8.5V5.3z" fill="none" stroke="#666" stroke-width="1"/></svg><svg class="b" style="left:163px;top:145px" width="11" height="8" viewBox="0 0 11 8" ><path d="M1.600 .400v6.300M4.100 .400v6.300M6.600 .400v6.300M9.100 .400v6.300" stroke="#7a7a7a" stroke-width="1.600" stroke-dasharray="1.700 .600" fill="none"/></svg><svg class="b" style="left:178px;top:146px" width="8" height="6" viewBox="0 0 8 6" ><path d="M1.7000000000000002 1.5h4.6L4 3.8z" fill="#555"/></svg><svg class="b" style="left:217px;top:246px" width="9" height="9" viewBox="0 0 9 9" ><path d="M1.500 8.200V4.600M4.500 8.200V6.200M7.400 8.200V1.300" stroke="#a2a2a2" stroke-width="1.800" fill="none"/></svg><svg class="b" style="left:328.1px;top:248.1px" width="8" height="6" viewBox="0 0 8 6" ><path d="M1.5 1.5h5.0L4 4.0z" fill="#444"/></svg><svg class="b" style="left:222px;top:272.5px" width="11.5" height="11.5" viewBox="0 0 11.5 11.5" ><circle cx="2.6" cy="2.6" r="2.6" fill="#8c6bb1"/><circle cx="8.9" cy="2.6" r="2.6" fill="#e0566d"/><circle cx="2.6" cy="8.9" r="2.6" fill="#f2a36e"/><circle cx="8.9" cy="8.9" r="2.6" fill="#7fa5d3"/></svg><svg class="b" style="left:266px;top:272px" width="16" height="14" viewBox="0 0 16 14" ><circle cx="8.8" cy="5.7" r="4.7" fill="none" stroke="#666"/><circle cx="4.6" cy="9.3" r="3.2" fill="#fcfcfc" stroke="#666"/></svg><svg class="b" style="left:313px;top:272px" width="15" height="13" viewBox="0 0 15 13" ><rect x="1" y="1" width="13" height="11" rx="1" fill="none" stroke="#777"/><path d="M4.5 3.8h6v1.3M7.5 3.8v5.6M6.3 9.4h2.4" fill="none" stroke="#555" stroke-width="1"/></svg><svg class="b" style="left:219px;top:317px" width="17" height="12" viewBox="0 0 17 12" ><circle cx="8.3" cy="2.300" r="2" fill="#555"/><g fill="none" stroke="#777"><circle cx="3" cy="8.5" r="1.9"/><circle cx="8.3" cy="8.5" r="1.9"/><circle cx="13.6" cy="8.5" r="1.9"/></g></svg><svg class="b" style="left:267px;top:317px" width="15" height="13" viewBox="0 0 15 13" ><path d="M2 1h10.5a1 1 0 0 1 1 1v6a1 1 0 0 1-1 1H11v3L8 9H2a1 1 0 0 1-1-1V2a1 1 0 0 1 1-1z" fill="none" stroke="#666"/></svg><svg class="b" style="left:215.5px;top:360px" width="10.399999999999999" height="10.399999999999999" viewBox="0 0 10.399999999999999 10.399999999999999" ><circle cx="2.3" cy="2.3" r="2.3" fill="#8c6bb1"/><circle cx="8.1" cy="2.3" r="2.3" fill="#e0566d"/><circle cx="2.3" cy="8.1" r="2.3" fill="#f2a36e"/><circle cx="8.1" cy="8.1" r="2.3" fill="#7fa5d3"/></svg><svg class="b" style="left:357px;top:85px" width="11" height="10" viewBox="0 0 11 10" ><path d="M1.5 3.5v6M5 3.5v6M8.5 3.5v6" stroke="#444" stroke-width="1.6" fill="none"/><path d="M1.5 .5v1.6M5 .5v1.6M8.5 .5v1.6" stroke="#444" stroke-width="1.6"/></svg><svg class="b" style="left:357px;top:114px" width="11" height="10" viewBox="0 0 11 10" ><path d="M3.5 1.5h7M3.5 5h7M3.5 8.5h7" stroke="#444" stroke-width="1.4" fill="none"/><path d="M.5 1.5h1.8M.5 5h1.8M.5 8.5h1.8" stroke="#444" stroke-width="1.4"/></svg><svg class="b" style="left:588px;top:86px" width="10" height="10" viewBox="0 0 10 10" ><path d="M.600 1.900h7.700M.600 5h4.500M.600 8.100h2.500" stroke="#fff" stroke-width="1.600" fill="none"/></svg><svg class="b" style="left:1266.6px;top:148.7px" width="8" height="6" viewBox="0 0 8 6" ><path d="M1.2999999999999998 1.5h5.4L4 4.2z" fill="#444"/></svg><svg class="b" style="left:368px;top:416px" width="10" height="10" viewBox="0 0 10 10" ><path d="M1.4 1v7.8" stroke="#111" stroke-width="1.5"/><path d="M4.4 4.4v4.4" stroke="#111" stroke-width="1.5"/><path d="M7.5 6v2.8" stroke="#111" stroke-width="1.5"/></svg></body></html>
